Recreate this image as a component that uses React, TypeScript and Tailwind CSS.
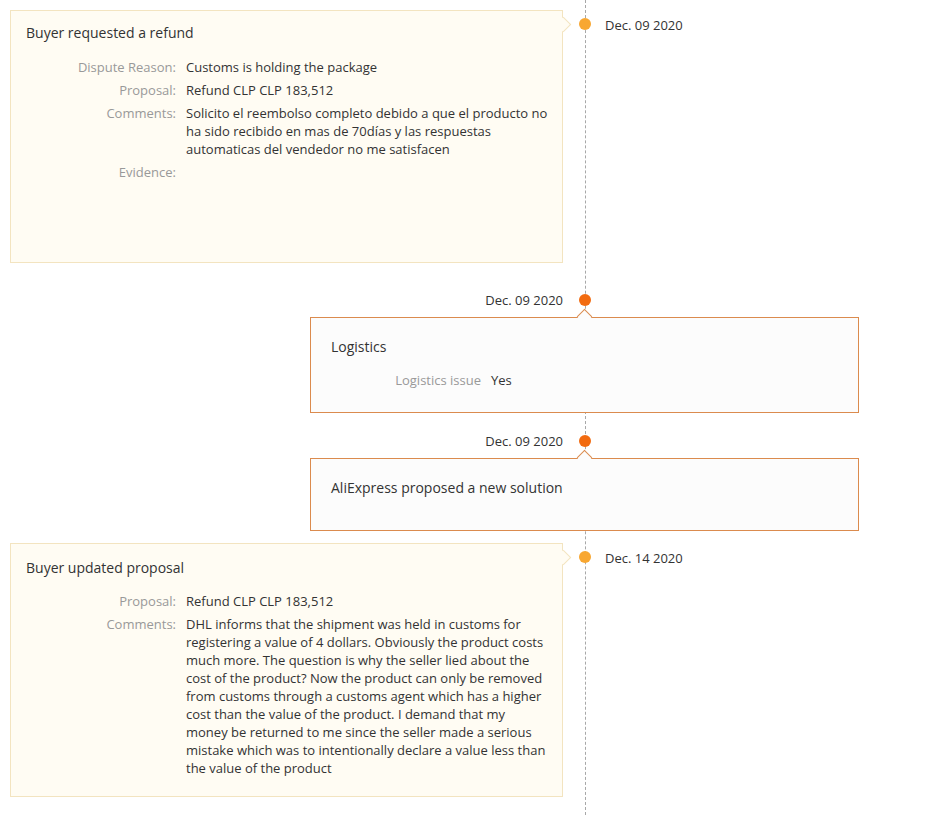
const font = { fontFamily: '"Open Sans", "Liberation Sans", sans-serif' };

type Row = { label: string; value: string };

const Rows = ({ rows }: { rows: Row[] }) => (
  <div className="flex flex-col gap-[5px] text-[13px] leading-[18px]">
    {rows.map((r, i) => (
      <div key={i} className="flex">
        <div className="w-[150px] shrink-0 text-right text-[#999]">{r.label}</div>
        <div className="ml-[10px] flex-1 text-[#333]">{r.value}</div>
      </div>
    ))}
  </div>
);

const LeftItem = ({
  date,
  title,
  rows,
  className,
  cardClass,
}: {
  date: string;
  title: string;
  rows: Row[];
  className: string;
  cardClass: string;
}) => (
  <div className={`flex items-start ${className}`}>
    <div
      className={`relative ml-[10px] w-[553px] border border-[#f3e4c0] bg-[#fffcf3] pl-[15px] pr-[14px] ${cardClass}`}
    >
      <div className="absolute right-[-7px] top-[8px] h-[11px] w-[11px] rotate-45 border-r border-t border-[#f3e4c0] bg-[#fffcf3]" />
      <div className="text-[14px] leading-5 text-[#333]">{title}</div>
      <Rows rows={rows} />
    </div>
    <div className="ml-4 mt-2 h-3 w-3 shrink-0 rounded-full bg-[#f8a731]" />
    <div className="ml-[14px] mt-[6px] text-[13px] leading-[18px] text-[#333]">{date}</div>
  </div>
);

const RightItem = ({
  date,
  className,
  cardClass,
  children,
}: {
  date: string;
  className: string;
  cardClass: string;
  children: React.ReactNode;
}) => (
  <div className={className}>
    <div className="flex items-center">
      <div className="w-[563px] pt-px text-right text-[13px] leading-[18px] text-[#333]">{date}</div>
      <div className="ml-4 h-3 w-3 rounded-full bg-[#f26b10]" />
    </div>
    <div
      className={`relative ml-[310px] mt-[8px] w-[549px] border border-[#db8b4e] bg-[#fcfcfc] pl-[20px] ${cardClass}`}
    >
      <div className="absolute left-[268px] top-[-7px] h-[11px] w-[11px] rotate-45 border-l border-t border-[#db8b4e] bg-[#fcfcfc]" />
      {children}
    </div>
  </div>
);

export default function App() {
  return (
    <div className="relative min-h-[815px] w-[936px] bg-white" style={font}>
      <div className="absolute bottom-0 left-[585px] top-0 w-0 border-l border-dashed border-[#a8a8a8]" />
      <div className="relative pt-[10px]">
        <LeftItem
          className=""
          cardClass="h-[253px] pt-[12px] [&>div:nth-child(2)]:mb-[15px]"
          date="Dec. 09 2020"
          title="Buyer requested a refund"
          rows={[
            { label: "Dispute Reason:", value: "Customs is holding the package" },
            { label: "Proposal:", value: "Refund CLP CLP 183,512" },
            {
              label: "Comments:",
              value:
                "Solicito el reembolso completo debido a que el producto no ha sido recibido en mas de 70días y las respuestas automaticas del vendedor no me satisfacen",
            },
            { label: "Evidence:", value: "" },
          ]}
        />

        <RightItem className="mt-[27px]" cardClass="h-[96px] pt-[19px]" date="Dec. 09 2020">
          <div className="mb-[14px] text-[14px] leading-5 text-[#333]">Logistics</div>
          <div className="flex text-[13px] leading-[18px]">
            <div className="w-[150px] text-right text-[#999]">Logistics issue</div>
            <div className="ml-[10px] text-[#333]">Yes</div>
          </div>
        </RightItem>

        <RightItem className="mt-[18px]" cardClass="h-[73px] pt-[19px]" date="Dec. 09 2020">
          <div className="text-[14px] leading-5 text-[#333]">AliExpress proposed a new solution</div>
        </RightItem>

        <LeftItem
          className="mt-[12px]"
          cardClass="h-[254px] pt-[14px] [&>div:nth-child(2)]:mb-[14px]"
          date="Dec. 14 2020"
          title="Buyer updated proposal"
          rows={[
            { label: "Proposal:", value: "Refund CLP CLP 183,512" },
            {
              label: "Comments:",
              value:
                "DHL informs that the shipment was held in customs for registering a value of 4 dollars. Obviously the product costs much more. The question is why the seller lied about the cost of the product? Now the product can only be removed from customs through a customs agent which has a higher cost than the value of the product. I demand that my money be returned to me since the seller made a serious mistake which was to intentionally declare a value less than the value of the product",
            },
          ]}
        />
      </div>
    </div>
  );
}
